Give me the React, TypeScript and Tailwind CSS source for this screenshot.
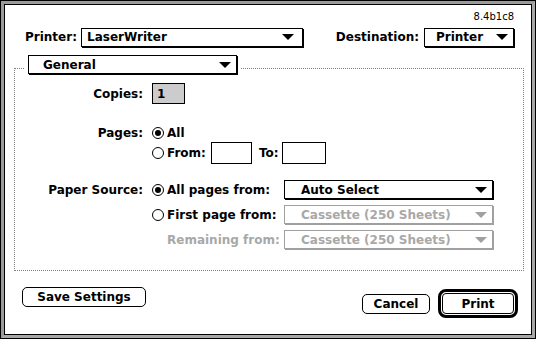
import React from 'react';

const Tri: React.FC<{ color?: string }> = ({ color = '#000' }) => (
  <svg width="12" height="6" viewBox="0 0 12 6" className="shrink-0">
    <polygon points="0,0 12,0 6,6" fill={color} />
  </svg>
);

const Popup: React.FC<{ label: string; className?: string; pad?: string; disabled?: boolean }> = ({
  label,
  className = '',
  pad = 'pl-[6px] pr-[6px]',
  disabled,
}) => (
  <div
    className={`flex h-[19px] shrink-0 items-center justify-between bg-white border ${
      disabled
        ? 'border-[#a0a0a0] text-[#a8a8a8] shadow-[1px_1px_0_#a0a0a0]'
        : 'border-black text-black shadow-[1px_1px_0_#000]'
    } ${pad} ${className}`}
  >
    <span className="whitespace-nowrap">{label}</span>
    <Tri color={disabled ? '#a0a0a0' : '#000'} />
  </div>
);

const Radio: React.FC<{ on?: boolean }> = ({ on }) => (
  <span className="flex h-[12px] w-[12px] shrink-0 items-center justify-center rounded-full border border-black bg-white">
    {on && <span className="h-[6px] w-[6px] rounded-full bg-black" />}
  </span>
);

const Label: React.FC<{ children?: React.ReactNode }> = ({ children }) => (
  <span className="w-[129px] shrink-0 pr-[1px] text-right whitespace-nowrap">{children}</span>
);

export default function App() {
  return (
    <div className="h-[339px] w-[536px] border border-black bg-white font-['DejaVu_Sans',sans-serif] text-[12px] font-bold leading-none text-black">
      <div className="h-full w-full border-[3px] border-t-[#9a9a9a] border-l-[#9a9a9a] border-r-[#a8a8a8] border-b-[#a8a8a8]">
        <div className="flex h-full w-full flex-col border border-black bg-white">
          {/* version */}
          <div className="flex h-[22px] justify-end pr-[17px] pt-[7px] text-[10px] font-normal">8.4b1c8</div>

          {/* printer / destination */}
          <div className="flex h-[20px] items-center pl-[20px] pr-[17px]">
            <span className="w-[56px] shrink-0">Printer:</span>
            <Popup label="LaserWriter" className="w-[222px]" pad="pl-[5px] pr-[8px]" />
            <div className="flex-1" />
            <span className="mr-[5px]">Destination:</span>
            <Popup label="Printer" className="w-[90px]" pad="pl-[11px] pr-[5px]" />
          </div>

          {/* group box */}
          <div className="relative ml-[9px] mt-[21px] h-[203px] w-[510px] shrink-0 border border-dotted border-[#808080]">
            <div className="absolute left-[9px] top-[-14px] bg-white px-[4px]">
              <Popup label="General" className="w-[209px]" pad="pl-[14px] pr-[5px]" />
            </div>

            <div className="flex flex-col">
              <div className="mt-[14px] flex h-[21px] items-center">
                <Label>Copies:</Label>
                <div className="ml-[8px] flex h-[21px] w-[33px] items-center border border-black bg-[#cccccc] pl-[4px]">1</div>
              </div>

              <div className="mt-[21px] flex h-[16px] items-center">
                <Label>Pages:</Label>
                <span className="ml-[8px]"><Radio on /></span>
                <span className="ml-[3px]">All</span>
              </div>

              <div className="mt-[1px] flex h-[22px] items-center">
                <Label />
                <span className="ml-[8px]"><Radio /></span>
                <span className="ml-[3px] w-[44px]">From:</span>
                <div className="h-[22px] w-[41px] border border-black bg-white" />
                <span className="ml-[7px] w-[23px]">To:</span>
                <div className="h-[22px] w-[44px] border border-black bg-white" />
              </div>

              <div className="mt-[16px] flex h-[20px] items-start">
                <Label>
                  <span className="relative top-[4px]">Paper Source:</span>
                </Label>
                <span className="ml-[8px] mt-[4px]"><Radio on /></span>
                <span className="ml-[3px] mt-[4px] w-[117px] whitespace-nowrap">All pages from:</span>
                <Popup label="Auto Select" className="w-[209px]" pad="pl-[16px] pr-[5px]" />
              </div>

              <div className="mt-[5px] flex h-[20px] items-start">
                <Label />
                <span className="ml-[8px] mt-[4px]"><Radio /></span>
                <span className="ml-[3px] mt-[4px] w-[117px] whitespace-nowrap">First page from:</span>
                <Popup label="Cassette (250 Sheets)" className="w-[209px]" pad="pl-[16px] pr-[5px]" disabled />
              </div>

              <div className="mt-[5px] flex h-[20px] items-start">
                <Label />
                <span className="ml-[23px] mt-[4px] w-[117px] whitespace-nowrap text-[#a8a8a8]">Remaining from:</span>
                <Popup label="Cassette (250 Sheets)" className="w-[209px]" pad="pl-[16px] pr-[5px]" disabled />
              </div>
            </div>
          </div>

          {/* buttons */}
          <div className="mt-[16px] flex items-start pl-[17px] pr-[13px]">
            <button className="flex h-[20px] w-[124px] items-center justify-center rounded-[5px] border border-black bg-white">
              Save Settings
            </button>
            <div className="flex-1" />
            <button className="mt-[7px] flex h-[20px] w-[68px] items-center justify-center rounded-[5px] border border-black bg-white">
              Cancel
            </button>
            <div className="ml-[8px] mt-[2px] flex h-[29px] w-[80px] items-center justify-center rounded-[8px] border-[3px] border-black bg-white p-[1px]">
              <button className="flex h-full w-full items-center justify-center rounded-[4px] border border-black bg-white">
                Print
              </button>
            </div>
          </div>
        </div>
      </div>
    </div>
  );
}
